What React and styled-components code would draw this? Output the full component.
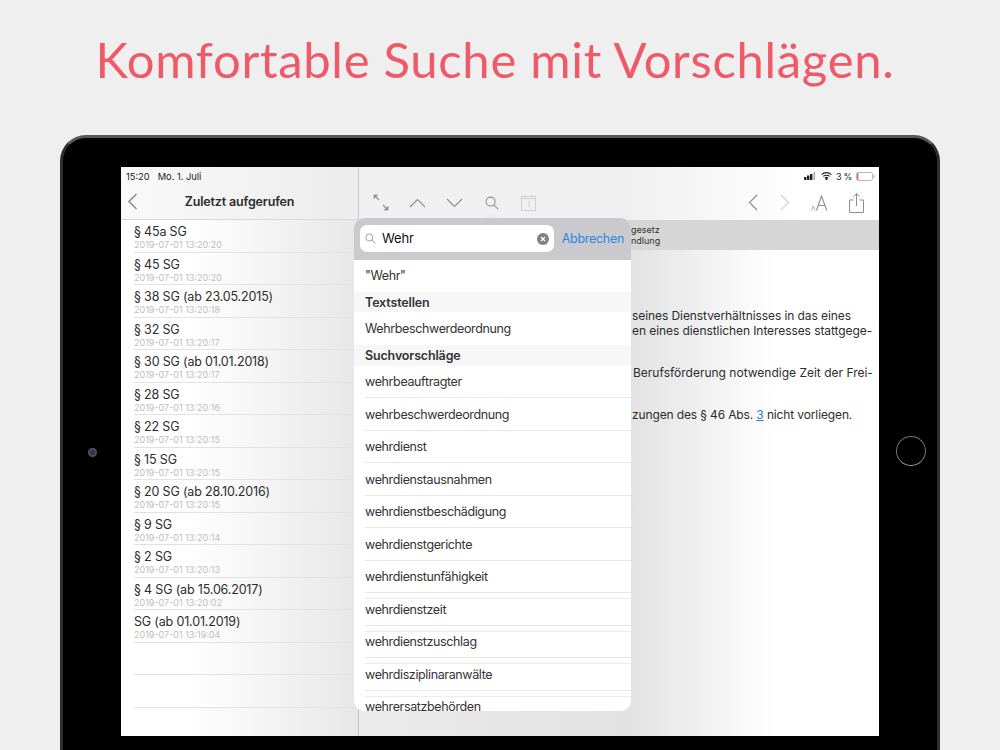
import React from "react";
import styled, { createGlobalStyle } from "styled-components";

const Global = createGlobalStyle`
  html, body { margin: 0; padding: 0; background: #efefef; }
  body { font-family: Inter, "Liberation Sans", sans-serif; }
`;

const Page = styled.div`
  width: 1000px;
  height: 750px;
  overflow: hidden;
  background: #efefef;
`;

const Headline = styled.h1`
  margin: 0;
  height: 135px;
  padding: 29px 10px 0 0;
  box-sizing: border-box;
  text-align: center;
  font-family: Lato, sans-serif;
  font-weight: 400;
  font-size: 49px;
  letter-spacing: 0.7px;
  line-height: 60px;
  color: #ee5a67;
`;

const Device = styled.div`
  position: relative;
  box-sizing: border-box;
  width: 880px;
  height: 660px;
  margin-left: 60px;
  padding: 29px 58px 0;
  background: #000;
  border: 3px solid #2c2e30;
  border-top-color: #55585a;
  border-radius: 26px 26px 0 0;
`;

const Camera = styled.span`
  position: absolute;
  left: 25px;
  top: 310px;
  width: 9px;
  height: 9px;
  border-radius: 50%;
  background: radial-gradient(circle, #30354f 30%, #5b6068 75%, #111 100%);
`;

const HomeButton = styled.span`
  position: absolute;
  left: 833px;
  top: 298px;
  width: 28px;
  height: 28px;
  border: 1.5px solid #777;
  border-bottom-color: #a5a5a5;
  border-radius: 50%;
`;

const Screen = styled.div`
  position: relative;
  display: flex;
  width: 758px;
  height: 569px;
  overflow: hidden;
  background: #fff;
  color: #2c2c2c;
`;

const Sidebar = styled.aside`
  flex: 0 0 237px;
  background: linear-gradient(90deg, #fff 0, #fff 28%, #e7e7e7 100%);
  border-right: 1px solid #c8c8c8;
`;

const StatusBar = styled.div`
  display: flex;
  align-items: center;
  gap: ${(p) => p.$gap || 0}px;
  height: 18px;
  padding: ${(p) => p.$pad || "0"};
  font-size: 9.3px;
  color: #222;
  white-space: nowrap;
`;

const StatusLayer = styled.div`
  position: relative;
  z-index: 1;
`;

const SideHeader = styled.div`
  position: relative;
  display: flex;
  align-items: center;
  justify-content: center;
  box-sizing: border-box;
  height: 53px;
  margin-top: -18px;
  padding: 18px 0 2px;
  border-bottom: 1px solid #d8d8d8;
  background: linear-gradient(90deg, #f9f9f9, #ececec);
  font-size: 12.5px;
  font-weight: 600;
  letter-spacing: -0.15px;
`;

const BackIcon = styled.span`
  position: absolute;
  left: 6px;
  top: 26px;
  display: flex;
`;

const SideList = styled.div`
  padding-left: 13px;
`;

const SideRow = styled.div`
  box-sizing: border-box;
  height: 32.5px;
  padding-top: 4px;
  border-bottom: 1px solid #e2e2e2;
`;

const SideTitle = styled.div`
  font-size: 12.5px;
  letter-spacing: -0.17px;
  line-height: 15px;
  color: #2c2c2c;
`;

const SideDate = styled.div`
  font-size: 9px;
  line-height: 11px;
  color: #bdbdbd;
`;

const Main = styled.main`
  flex: 1;
  min-width: 0;
  background: linear-gradient(90deg, #ebebeb 0, #e2e2e2 52%, #fff 80%);
`;

const TopBars = styled.div`
  background: linear-gradient(90deg, #f0f0f0 0, #f0f0f0 52%, #fff 85%);
`;

const StatusRight = styled(StatusBar)`
  justify-content: flex-end;
  padding-right: 4px;
  font-size: 9px;
`;

const Percent = styled.span`
  letter-spacing: -0.3px;
`;

const Toolbar = styled.div`
  display: flex;
  align-items: center;
  height: 36px;
  box-sizing: border-box;
  padding: 0 4px 0 3px;
  border-bottom: 1px solid #d4d4d4;
`;

const ToolSlot = styled.span`
  display: flex;
  align-items: center;
  justify-content: center;
  flex: 0 0 ${(p) => p.$w || 37}px;
  margin-left: ${(p) => (p.$push ? "auto" : "0")};
  height: 100%;
`;

const Crumb = styled.div`
  box-sizing: border-box;
  height: 29px;
  padding: 3px 0 0 272px;
  background: #d6d6d6;
  font-size: 9px;
  line-height: 11px;
  color: #333;
`;

const Article = styled.article`
  padding: 58px 0 0 273px;
  font-size: 12px;
  line-height: 15px;
  color: #2c2c2c;
  white-space: nowrap;
`;

const Para = styled.p`
  margin: 0 0 27px;
  padding-left: ${(p) => p.$x || 0}px;
  letter-spacing: ${(p) => p.$ls || 0}px;
`;

const Ref = styled.a`
  color: #2a7fc9;
  text-decoration: underline;
`;

const Popover = styled.div`
  position: absolute;
  left: 233px;
  top: 51px;
  width: 277px;
  height: 493px;
  border-radius: 10px;
  background: #fff;
  overflow: hidden;
`;

const PopArrow = styled.span`
  position: absolute;
  left: 361px;
  top: 45px;
  width: 0;
  height: 0;
  border-left: 9px solid transparent;
  border-right: 9px solid transparent;
  border-bottom: 6px solid #ededed;
`;

const SearchHead = styled.div`
  display: flex;
  align-items: center;
  box-sizing: border-box;
  height: 42px;
  padding: 0 7px 1px 6px;
  background: #c9c9ce;
`;

const SearchField = styled.div`
  display: flex;
  align-items: center;
  flex: 0 0 194px;
  box-sizing: border-box;
  height: 27px;
  padding: 0 5px;
  border-radius: 7px;
  background: #fff;
  font-size: 13px;
  letter-spacing: -0.1px;
  color: #111;
`;

const FieldText = styled.span`
  flex: 1;
  margin: 0 0 1px 6px;
`;

const Cancel = styled.span`
  margin-left: auto;
  font-size: 12.5px;
  letter-spacing: -0.3px;
  color: #2f86e0;
`;

const Row = styled.div`
  display: flex;
  align-items: center;
  box-sizing: border-box;
  height: ${(p) => p.$h || 32.5}px;
  margin-left: 11px;
  padding: ${(p) => p.$pad || "1px 0 0"};
  font-size: 12.5px;
  letter-spacing: -0.37px;
  color: #333;
  border-bottom: ${(p) => (p.$plain ? "none" : "1px solid #e6e6e6")};
  background: ${(p) =>
    p.$ghost ? "linear-gradient(#ececec, #ececec) no-repeat 0 5px / 100% 1px" : "none"};
`;

const SectionHead = styled.div`
  display: flex;
  align-items: center;
  height: ${(p) => p.$h || 20}px;
  padding-left: 11px;
  background: #f7f7f7;
  font-size: 12.5px;
  font-weight: 600;
  letter-spacing: -0.15px;
  color: #333;
`;

const Line = ({ d, w, h, vb, color = "#8e8e8e", sw = 1.2 }) => (
  <svg width={w} height={h} viewBox={vb || `0 0 ${w} ${h}`} fill="none" stroke={color} strokeWidth={sw}>
    {d.map((x) => (
      <path key={x} d={x} />
    ))}
  </svg>
);

const SearchGlyph = ({ size = 14, color = "#8e8e8e" }) => (
  <svg width={size} height={size} viewBox="0 0 15 15" fill="none" stroke={color} strokeWidth="1.1">
    <circle cx="6" cy="6" r="4.8" />
    <path d="M9.5 9.5L14 14" />
  </svg>
);

const Items = [
  ["§ 45a SG", "2019-07-01 13:20:20"],
  ["§ 45 SG", "2019-07-01 13:20:20"],
  ["§ 38 SG (ab 23.05.2015)", "2019-07-01 13:20:18"],
  ["§ 32 SG", "2019-07-01 13:20:17"],
  ["§ 30 SG (ab 01.01.2018)", "2019-07-01 13:20:17"],
  ["§ 28 SG", "2019-07-01 13:20:16"],
  ["§ 22 SG", "2019-07-01 13:20:15"],
  ["§ 15 SG", "2019-07-01 13:20:15"],
  ["§ 20 SG (ab 28.10.2016)", "2019-07-01 13:20:15"],
  ["§ 9 SG", "2019-07-01 13:20:14"],
  ["§ 2 SG", "2019-07-01 13:20:13"],
  ["§ 4 SG (ab 15.06.2017)", "2019-07-01 13:20:02"],
  ["SG (ab 01.01.2019)", "2019-07-01 13:19:04"],
  ["", ""],
  ["", ""],
];

const Suggestions = [
  "wehrbeauftragter",
  "wehrbeschwerdeordnung",
  "wehrdienst",
  "wehrdienstausnahmen",
  "wehrdienstbeschädigung",
  "wehrdienstgerichte",
  "wehrdienstunfähigkeit",
  "wehrdienstzeit",
  "wehrdienstzuschlag",
  "wehrdisziplinaranwälte",
  "wehrersatzbehörden",
];

export default function App() {
  return (
    <Page>
      <Global />
      <Headline>Komfortable Suche mit Vorschlägen.</Headline>
      <Device>
        <Camera />
        <HomeButton />
        <Screen>
          <Sidebar>
            <StatusLayer>
              <StatusBar $gap={8} $pad="0 0 0 5px">
                <span>15:20</span>
                <span>Mo. 1. Juli</span>
              </StatusBar>
            </StatusLayer>
            <SideHeader>
              <BackIcon>
                <Line w={11} h={17} d={["M9.5 1L2 8.5L9.5 16"]} sw={1.6} />
              </BackIcon>
              Zuletzt aufgerufen
            </SideHeader>
            <SideList>
              {Items.map(([t, d], i) => (
                <SideRow key={i}>
                  <SideTitle>{t}</SideTitle>
                  <SideDate>{d}</SideDate>
                </SideRow>
              ))}
            </SideList>
          </Sidebar>
          <Main>
            <TopBars>
              <StatusRight $gap={4}>
                <svg width="13" height="8" viewBox="0 0 13 8" fill="#222">
                  <rect x="0" y="5" width="2.4" height="3" />
                  <rect x="3" y="3.5" width="2.4" height="4.5" />
                  <rect x="6" y="2" width="2.4" height="6" />
                  <rect x="9.5" y="0" width="1.6" height="8" fill="#aaa" />
                </svg>
                <svg width="11" height="8" viewBox="0 0 11 8" fill="none" stroke="#222" strokeWidth="1.1">
                  <path d="M0.6 2.6C3.4 0 7.6 0 10.4 2.6" />
                  <path d="M2.3 4.3C4 2.8 7 2.8 8.7 4.3" />
                  <path d="M4 6C4.8 5.3 6.2 5.3 7 6" />
                  <circle cx="5.5" cy="7" r="0.6" fill="#222" />
                </svg>
                <Percent>3 %</Percent>
                <svg width="19" height="9" viewBox="0 0 19 9" fill="none">
                  <rect x="0.5" y="0.5" width="16" height="8" rx="2" stroke="#b5b5b5" />
                  <rect x="1" y="1" width="1.5" height="7" fill="#ef6a78" />
                  <path d="M18 3.2V5.8" stroke="#aaa" />
                </svg>
              </StatusRight>
              <Toolbar>
                <ToolSlot>
                  <svg width="16" height="17" viewBox="0 0 16 17" fill="#8e8e8e" stroke="#8e8e8e" strokeWidth="0.8">
                    <path d="M3 3L6 6" fill="none" strokeWidth="1.1" />
                    <path d="M1 1H4.6L1 4.6Z" />
                    <path d="M13 14L10 11" fill="none" strokeWidth="1.1" />
                    <path d="M15 16H11.4L15 12.4Z" />
                  </svg>
                </ToolSlot>
                <ToolSlot>
                  <Line w={17} h={10} d={["M1 9L8.5 1.5L16 9"]} />
                </ToolSlot>
                <ToolSlot>
                  <Line w={17} h={10} d={["M1 1L8.5 8.5L16 1"]} />
                </ToolSlot>
                <ToolSlot>
                  <SearchGlyph />
                </ToolSlot>
                <ToolSlot>
                  <svg width="15" height="16" viewBox="0 0 15 16" fill="none" stroke="#d0d0d0">
                    <rect x="0.5" y="1.5" width="14" height="14" />
                    <path d="M0.5 3.5H14.5M3.5 0V2M11.5 0V2M7.5 7L8 6.5V12.5" />
                  </svg>
                </ToolSlot>
                <ToolSlot $push $w={30}>
                  <Line w={10} h={17} d={["M9 1L1.5 8.5L9 16"]} />
                </ToolSlot>
                <ToolSlot $w={33}>
                  <Line w={10} h={17} color="#d2d2d2" d={["M1 1L8.5 8.5L1 16"]} />
                </ToolSlot>
                <ToolSlot $w={37}>
                  <svg width="17" height="16" viewBox="0 0 17 16" fill="none" stroke="#8e8e8e">
                    <path d="M5.5 15.5L10.5 1L15.8 15.5M7 10.5H14.2" strokeWidth="1.1" />
                    <path d="M0.5 15.5L2.3 11L4 15.5" strokeWidth="0.7" />
                  </svg>
                </ToolSlot>
                <ToolSlot $w={37}>
                  <svg width="15" height="20" viewBox="0 0 15 20" fill="none" stroke="#8e8e8e" strokeWidth="1">
                    <path d="M4.5 7H0.5V19.5H14.5V7H10.5" />
                    <path d="M7.5 13V0.8M4.5 3.5L7.5 0.7L10.5 3.5" />
                  </svg>
                </ToolSlot>
              </Toolbar>
            </TopBars>
            <Crumb>
              gesetz
              <br />
              ndlung
            </Crumb>
            <Article>
              <Para $ls={-0.08}>
                seines Dienstverhältnisses in das eines
                <br />
                en eines dienstlichen Interesses stattgege-
              </Para>
              <Para $x={1}>Berufsförderung notwendige Zeit der Frei-</Para>
              <Para $ls={-0.13}>
                zungen des § 46 Abs. <Ref>3</Ref> nicht vorliegen.
              </Para>
            </Article>
          </Main>
          <PopArrow />
          <Popover>
            <SearchHead>
              <SearchField>
                <SearchGlyph size={11} />
                <FieldText>Wehr</FieldText>
                <svg width="12" height="12" viewBox="0 0 12 12">
                  <circle cx="6" cy="6" r="6" fill="#808080" />
                  <path d="M4 4L8 8M8 4L4 8" stroke="#fff" strokeWidth="1.4" />
                </svg>
              </SearchField>
              <Cancel>Abbrechen</Cancel>
            </SearchHead>
            <Row $plain $h={32} $pad="0 0 1px">"Wehr"</Row>
            <SectionHead>Textstellen</SectionHead>
            <Row $plain $h={33} $pad="0">Wehrbeschwerdeordnung</Row>
            <SectionHead $h={20.5}>Suchvorschläge</SectionHead>
            {Suggestions.map((s, i) => (
              <Row key={s} $ghost={i >= 7}>
                {s}
              </Row>
            ))}
          </Popover>
        </Screen>
      </Device>
    </Page>
  );
}
